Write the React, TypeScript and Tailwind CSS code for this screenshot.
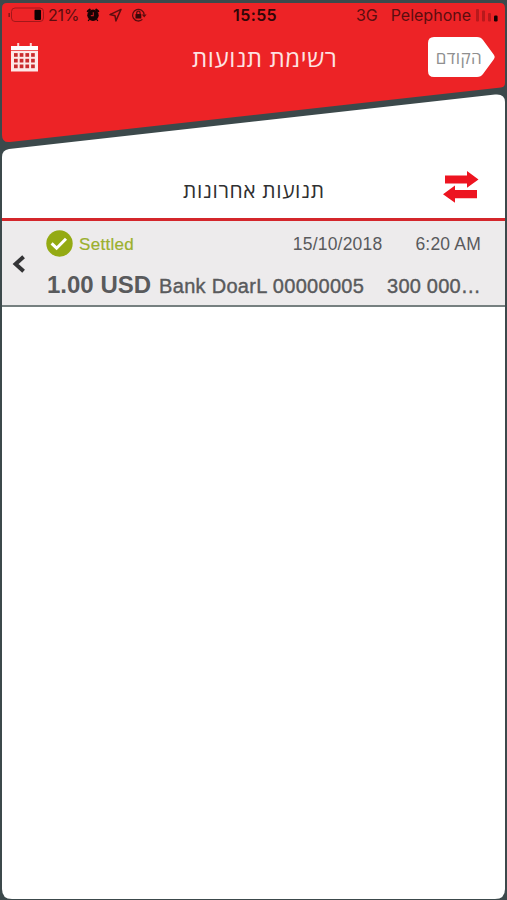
import type { ReactNode } from 'react';

type Transaction = {
  status: string;
  date: string;
  time: string;
  amount: string;
  account: string;
  reference: string;
};

const TRANSACTIONS: Transaction[] = [
  {
    status: 'Settled',
    date: '15/10/2018',
    time: '6:20 AM',
    amount: '1.00 USD',
    account: 'Bank DoarL 00000005',
    reference: '300 000…',
  },
];

const COLS = [3.5, 9.2, 14.9, 20.6];
const ROWS = [10.6, 16.3, 22];

function Battery() {
  return (
    <svg width="36" height="16" viewBox="0 0 36 16" fill="none">
      <path d="M1.2 6v4" stroke="#8f1416" strokeWidth="1.6" />
      <rect x="3.5" y="1" width="32" height="13.5" rx="3.5" stroke="#a3171a" strokeWidth="1" />
      <rect x="26.5" y="2.8" width="6.5" height="10.2" rx="1" fill="#0d0203" />
    </svg>
  );
}

function AlarmIcon() {
  return (
    <svg width="14" height="14" viewBox="0 0 14 14">
      <path d="M1.7 3.2 3.8 1.6M12.3 3.2 10.2 1.6" stroke="#180304" strokeWidth="2" strokeLinecap="round" />
      <circle cx="7" cy="7.3" r="5.7" fill="#180304" />
      <path d="M7.3 4.2v3.4H4.8" stroke="#c41d20" strokeWidth="1.1" fill="none" />
      <path d="m3.2 11.5-1 1.5M10.8 11.5l1 1.5" stroke="#180304" strokeWidth="1.3" />
    </svg>
  );
}

function LocationIcon() {
  return (
    <svg width="13" height="14" viewBox="0 0 13 14" fill="none" stroke="#5c0d0f" strokeWidth="1.5" strokeLinejoin="round">
      <path d="M12 1.4 1 6.6l5 1.1.9 5.2z" />
    </svg>
  );
}

function RotationLockIcon() {
  return (
    <svg width="16" height="14" viewBox="0 0 16 14" fill="none" stroke="#5c0d0f" strokeWidth="1.3">
      <path d="M11.4 11.4A5.8 5.8 0 1 1 13.2 6.6" />
      <path d="m10.8 6.4 2.4 3 2.4-3z" fill="#5c0d0f" stroke="none" />
      <rect x="4.5" y="6" width="5.8" height="4.4" rx=".5" fill="#3d0809" stroke="none" />
      <path d="M5.7 6.2V4.9a1.7 1.7 0 0 1 3.4 0v1.3" />
    </svg>
  );
}

function SignalIcon() {
  return (
    <svg width="22" height="13" viewBox="0 0 22 13">
      <rect x="0" y="0" width="3" height="12.5" rx="1" fill="#b8191c" />
      <rect x="6" y="1.5" width="3" height="11" rx="1" fill="#b8191c" />
      <rect x="12" y="4" width="3" height="8.5" rx="1" fill="#b8191c" />
      <rect x="18" y="6.5" width="3.6" height="6" rx="1.2" fill="#160203" />
    </svg>
  );
}

function CalendarIcon() {
  return (
    <svg width="27" height="29" viewBox="0 0 27 29">
      <path d="M6.2 0h2v3h-2zM18.8 0h2v3h-2z" fill="#fbd5d4" />
      <path d="M0 3h27v4.2H0z" fill="#fff" />
      <path d="M0 8h27v20.5H0z" fill="#fde8e7" />
      {ROWS.map((y) => COLS.map((x) => <rect key={`${x}-${y}`} x={x - 0.5} y={y - 0.5} width="3.7" height="3.7" fill="#c92b2d" />))}
    </svg>
  );
}

function TransferIcon() {
  return (
    <svg width="36" height="32" viewBox="0 0 36 32" fill="#ed1420">
      <path d="M2 4.4h22V0l11.5 8.6L24 16.8v-4.2H2z" />
      <path d="M34 19H12v-4.6L0 23.2 12 31.8v-4.6h22z" />
    </svg>
  );
}

function StatusBadge({ children }: { children: ReactNode }) {
  return (
    <div className="flex items-center">
      <svg width="27" height="27" viewBox="0 0 27 27" fill="none">
        <circle cx="13.5" cy="13.5" r="13.2" fill="#94aa13" />
        <path d="m5.6 13.4 5 4.8 9.4-9.4" stroke="#fff" strokeWidth="3" />
      </svg>
      <span className="ml-[6px] mt-[2px] text-[17px] leading-[20px] tracking-[0.3px] text-[#9bb02e] [-webkit-text-stroke:0.2px]">{children}</span>
    </div>
  );
}

function TransactionRow({ tx }: { tx: Transaction }) {
  return (
    <button className="flex h-[86px] w-full items-start border-b-2 border-[#768080] bg-[#edebec] text-left text-[#595a5c]">
      <svg className="ml-[10px] mt-[34px] shrink-0" width="13" height="18" viewBox="0 0 13 18" fill="none">
        <path d="M11.6 1.8 3.6 9l8 7.2" stroke="#343436" strokeWidth="4" />
      </svg>
      <div className="ml-[21px] mr-[24px] flex-1">
        <div className="mt-[9px] flex h-[27px] items-center">
          <StatusBadge>{tx.status}</StatusBadge>
          <span className="ml-auto mt-[1px] text-[17.5px] tracking-[0.2px]">{tx.date}</span>
          <span className="ml-[33px] mt-[1px] text-[17.5px] tracking-[0.2px]">{tx.time}</span>
        </div>
        <div className="mt-[14px] flex h-[28px] items-baseline whitespace-nowrap">
          <span className="ml-[1px] text-[24px] font-bold leading-[28px]">{tx.amount}</span>
          <span className="ml-[8px] text-[20px] tracking-[0.3px] [-webkit-text-stroke:0.4px]">{tx.account}</span>
          <span className="ml-auto text-[20px] tracking-[0.2px] [-webkit-text-stroke:0.4px]">{tx.reference}</span>
        </div>
      </div>
    </button>
  );
}

export default function App() {
  return (
    <div className="flex h-[900px] w-[507px] flex-col overflow-hidden bg-[#3c494b] pl-[2px] pr-[2px] pt-[3px] font-['Liberation_Sans',sans-serif]">
      {/* Red header with a slanted bottom edge */}
      <header className="h-[140px] shrink-0 bg-[#ed2326] [clip-path:path('M0_5Q0_0_5_0H498Q503_0_503_5V80Q503_84_499_84.5L8_139Q0_140_0_132Z')]">
        <div className="flex h-[24px] items-center pl-[6px] pr-[7px] font-['Inter',sans-serif] text-[16px] text-[#5c0d0f]">
          <Battery />
          <span className="ml-[4px] w-[30px] tracking-[-0.2px]">21%</span>
          <div className="ml-[8px] flex items-center gap-[9px]">
            <AlarmIcon />
            <LocationIcon />
            <RotationLockIcon />
          </div>
          <span className="ml-[86px] w-[46px] font-semibold tracking-[0.4px] text-[#310607]">15:55</span>
          <span className="ml-auto">3G</span>
          <span className="ml-[13px]">Pelephone</span>
          <span className="ml-[5px]">
            <SignalIcon />
          </span>
        </div>
        <div className="flex items-start">
          <button className="ml-[9px] mt-[16px]" title="Calendar">
            <CalendarIcon />
          </button>
          <h1 dir="rtl" className="ml-[154px] mt-[15px] whitespace-nowrap font-['Open_Sans',sans-serif] text-[24px] leading-[32px] tracking-[0.6px] text-[#fde3e3]">
            רשימת תנועות
          </h1>
          <button
            dir="rtl"
            className="ml-auto mr-[9px] mt-[10px] h-[40px] w-[68px] bg-white pr-[14px] text-right font-['Open_Sans',sans-serif] text-[17px] leading-[41px] tracking-[0.4px] text-[#8f8f8f] [clip-path:path('M0_6Q0_0_6_0H49Q53_0_55_3L66_18Q67.5_20_66_22L55_37Q53_40_49_40H6Q0_40_0_34Z')]"
          >
            הקודם
          </button>
        </div>
      </header>

      {/* Sheet */}
      <main className="-mt-[52px] h-[808px] shrink-0 bg-white [clip-path:path('M0_66Q0_59_7_58L493_3.5Q503_2.5_503_11V798Q503_808_493_808H10Q0_808_0_798Z')]">
        <div className="flex h-[130px] items-start border-b-[3px] border-[#d4262b]">
          <h2 dir="rtl" className="ml-[181px] mt-[84px] whitespace-nowrap font-['Open_Sans',sans-serif] text-[21px] leading-[30px] tracking-[0.6px] text-[#2f3031]">
            תנועות אחרונות
          </h2>
          <span className="ml-auto mr-[26px] mt-[80px]">
            <TransferIcon />
          </span>
        </div>
        {TRANSACTIONS.map((tx) => (
          <TransactionRow key={tx.reference} tx={tx} />
        ))}
      </main>
    </div>
  );
}
